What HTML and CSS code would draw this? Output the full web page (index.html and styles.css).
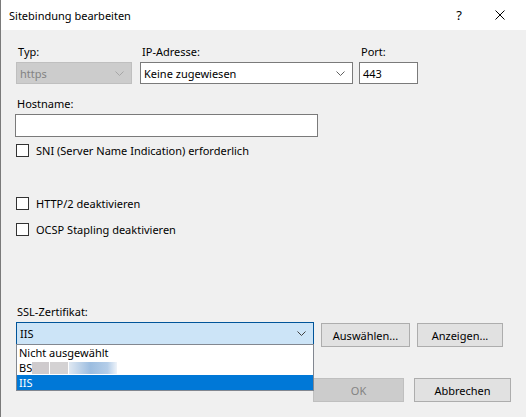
FILE: index.html
```html
<!DOCTYPE html>
<html lang="de">
<head>
<meta charset="utf-8">
<title>Sitebindung bearbeiten</title>
<link rel="stylesheet" href="styles.css">
</head>
<body>
<div class="window">
  <div class="titlebar">
    <span class="title">Sitebindung bearbeiten</span>
    <span class="help">?</span>
    <span class="close">
      <svg width="10" height="10" viewBox="0 0 10 10"><path d="M0.5 0.5 L9.5 9.5 M9.5 0.5 L0.5 9.5" stroke="#000" stroke-width="1" fill="none"/></svg>
    </span>
  </div>
  <div class="content">
    <div class="row-fields">
      <div class="field f-typ">
        <label class="lbl">Typ:</label>
        <div class="combo disabled"><span>https</span><svg class="chev" width="9" height="5" viewBox="0 0 9 5"><path d="M0.5 0.5 L4.5 4.5 L8.5 0.5" stroke="#a6a6a6" fill="none"/></svg></div>
      </div>
      <div class="field f-ip">
        <label class="lbl">IP-Adresse:</label>
        <div class="combo"><span>Keine zugewiesen</span><svg class="chev" width="9" height="5" viewBox="0 0 9 5"><path d="M0.5 0.5 L4.5 4.5 L8.5 0.5" stroke="#606060" fill="none"/></svg></div>
      </div>
      <div class="field f-port">
        <label class="lbl">Port:</label>
        <div class="textbox"><span>443</span></div>
      </div>
    </div>
    <label class="lbl host-lbl">Hostname:</label>
    <div class="textbox host"></div>
    <div class="check sni"><span class="box"></span><span>SNI (Server Name Indication) erforderlich</span></div>
    <div class="check http2"><span class="box"></span><span>HTTP/2 deaktivieren</span></div>
    <div class="check ocsp"><span class="box"></span><span>OCSP Stapling deaktivieren</span></div>
    <label class="lbl ssl-lbl">SSL-Zertifikat:</label>
    <div class="ssl-row">
      <div class="ssl-wrap">
        <div class="combo focus"><span>IIS</span><svg class="chev" width="9" height="5" viewBox="0 0 9 5"><path d="M0.5 0.5 L4.5 4.5 L8.5 0.5" stroke="#404040" fill="none"/></svg></div>
        <ul class="dropdown">
          <li>Nicht ausgewählt</li>
          <li class="blurred"><span class="bs">BS</span><span class="blur b1"></span><span class="blur b2"></span><span class="blur b3"></span></li>
          <li class="sel">IIS</li>
        </ul>
      </div>
      <button class="btn b-select">Auswählen...</button>
      <button class="btn b-view">Anzeigen...</button>
    </div>
    <div class="bottom-row">
      <button class="btn ok" disabled>OK</button>
      <button class="btn cancel">Abbrechen</button>
    </div>
  </div>
</div>
</body>
</html>
```
FILE: styles.css
```css
* { box-sizing: border-box; }
html, body { margin: 0; padding: 0; }
body {
  width: 526px;
  height: 417px;
  overflow: hidden;
  font-family: "Noto Sans", "Open Sans", sans-serif;
  font-size: 11px;
  color: #000;
  background: #f0f0f0;
}
.window {
  height: 417px;
  border-left: 1px solid #7a7a7a;
  background: #f0f0f0;
}
.titlebar {
  height: 30px;
  background: #fff;
  display: flex;
  align-items: center;
  padding-left: 8px;
  position: relative;
}
.title { flex: 1; font-size: 11px; }
.help { width: 12px; margin-right: 30px; text-align: center; font-size: 13px; }
.close { width: 10px; margin-right: 21px; display: flex; }
.content {
  padding: 14px 0 0 14px;
}
.row-fields { display: flex; }
.field { display: flex; flex-direction: column; }
.lbl { display: block; line-height: 15px; height: 15px; padding-left: 2px; margin-bottom: 3px; }
.f-typ { width: 116px; margin-left: 1px; }
.f-ip { width: 213px; margin-left: 8px; }
.f-port { width: 59px; margin-left: 6px; }
.combo {
  height: 22px;
  border: 1px solid #7a7a7a;
  background: #fff;
  display: flex;
  align-items: center;
  padding: 0 7px 0 3px;
  justify-content: space-between;
}
.combo.disabled {
  background: #cccccc;
  border-color: #bfbfbf;
  color: #838383;
}
.combo.focus {
  background: #cce4f7;
  border-color: #005499;
  height: 23px;
}
.textbox {
  height: 22px;
  border: 1px solid #7a7a7a;
  background: #fff;
  display: flex;
  align-items: center;
  padding-left: 3px;
}
.host-lbl { margin-top: 12px; }
.textbox.host { width: 303px; height: 23px; margin-left: 0; }
.check { display: flex; align-items: center; height: 13px; padding-left: 1px; }
.check .box {
  width: 13px; height: 13px;
  border: 1px solid #333;
  background: #fff;
  margin-right: 7px;
  flex: none;
}
.sni { margin-top: 7px; }
.http2 { margin-top: 40px; }
.ocsp { margin-top: 13px; }
.ssl-lbl { margin-top: 68px; }
.ssl-row { display: flex; align-items: flex-start; }
.ssl-wrap { width: 298px; position: relative; margin-left: 1px; }
.dropdown {
  position: absolute;
  left: 0; top: 22px;
  width: 298px;
  margin: 0; padding: 0;
  list-style: none;
  background: #fff;
  border: 1px solid #828790;
  z-index: 5;
}
.dropdown li { height: 15px; line-height: 15px; padding-left: 2px; white-space: nowrap; }
.dropdown li.sel { background: #0078d7; color: #fff; }
.blurred { display: flex; align-items: center; }
.bs { flex: none; }
.blur { display: block; height: 12px; flex: none; }
.b1 { width: 17px; background: #cfcbcd; }
.b2 { width: 18px; background: #d4d2d3; margin-left: 1px; }
.b3 { width: 48px; background: linear-gradient(90deg, #dfe8f2 0%, #9cbde0 45%, #b4cde8 80%, #eef3f9 100%); margin-left: 1px; }
.btn {
  font-family: inherit;
  font-size: 11px;
  color: #000;
  background: #e1e1e1;
  border: 1px solid #adadad;
  height: 24px;
  padding: 0;
  margin: 0;
}
.b-select { width: 89px; margin-left: 7px; margin-top: 1px; }
.b-view { width: 86px; margin-left: 7px; margin-top: 1px; }
.bottom-row { display: flex; margin-top: 31px; padding-left: 298px; }
.ok { width: 91px; background: #cccccc; border-color: #bfbfbf; color: #838383; }
.cancel { width: 97px; margin-left: 10px; }
```
